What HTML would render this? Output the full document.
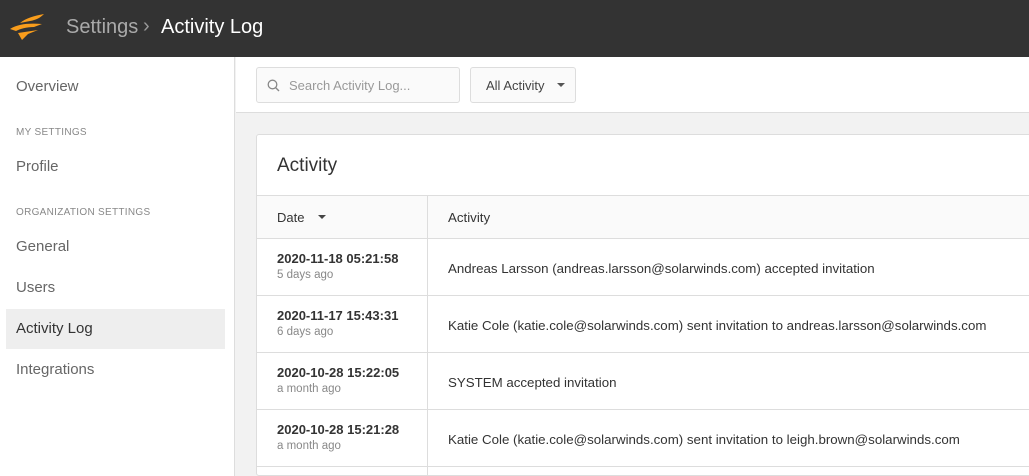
<!DOCTYPE html>
<html><head><style>
*{margin:0;padding:0;box-sizing:border-box}
html,body{width:1029px;height:476px;overflow:hidden}
body{font-family:"Liberation Sans",sans-serif;background:#f2f2f2;position:relative;color:#333}
.hdr{position:absolute;left:0;top:0;width:1029px;height:57px;background:#333}
.hdr .t{position:absolute;top:16px;font-size:20px}
.side{position:absolute;left:0;top:57px;width:235px;height:419px;background:#fff;border-right:1px solid #ddd}
.side .i{position:absolute;left:16px;font-size:15px;color:#666}
.side .s{position:absolute;left:16px;font-size:10px;color:#888;letter-spacing:.3px}
.act{position:absolute;left:6px;width:219px;height:40px;background:#eee}
.tool{position:absolute;left:236px;top:57px;width:793px;height:56px;background:#fff;border-bottom:1px solid #ddd}
.box{position:absolute;top:10px;height:36px;border:1px solid #ddd;border-radius:3px;background:#fafafa;font-size:13px}
.card{position:absolute;left:256px;top:134px;width:780px;height:342px;background:#fff;border:1px solid #ddd;border-radius:3px;overflow:hidden}
.row{position:absolute;left:0;width:780px;border-top:1px solid #ddd}
.vl{position:absolute;left:170px;top:61px;width:1px;height:300px;background:#ddd}
.d{position:absolute;left:20px;font-size:13px;font-weight:bold;color:#333}
.a{position:absolute;left:12px;font-size:11.5px;color:#888}
.x{position:absolute;left:191px;font-size:13.3px;color:#333}
</style></head><body>
<div class="hdr">
<svg style="position:absolute;left:8px;top:12px" width="38" height="30" viewBox="0 0 38 30"><path d="M2 17 C10 12 20 11 34 12 L26 15 C18 15 12 17 8 19Z" fill="#f99d1c"/><path d="M12 11 C18 6 26 4 36 2 C32 6 28 8 22 9Z" fill="#f99d1c"/><path d="M10 21 L30 18 L20 22 L14 28Z" fill="#f99d1c"/></svg>
<div class="t" style="left:66px;color:#aaa">Settings</div>
<div class="t" style="left:143px;color:#999;font-size:20px;top:15px">›</div>
<div class="t" style="left:161px;color:#fff">Activity Log</div>
</div>
<div class="side">
<div class="i" style="top:21px">Overview</div>
<div class="s" style="top:70px">MY SETTINGS</div>
<div class="i" style="top:101px">Profile</div>
<div class="s" style="top:150px">ORGANIZATION SETTINGS</div>
<div class="i" style="top:181px">General</div>
<div class="i" style="top:222px">Users</div>
<div class="act" style="top:252px"></div>
<div class="i" style="top:263px;color:#333">Activity Log</div>
<div class="i" style="top:304px">Integrations</div>
</div>
<div class="tool">
<div class="box" style="left:20px;width:204px"><svg style="position:absolute;left:10px;top:11px" width="13" height="13" viewBox="0 0 13 13"><circle cx="5.5" cy="5.5" r="4.3" fill="none" stroke="#888" stroke-width="1.3"/><path d="M8.6 8.6L12 12" stroke="#888" stroke-width="1.4"/></svg><span style="position:absolute;left:32px;top:10px;color:#999">Search Activity Log...</span></div>
<div class="box" style="left:234px;width:106px"><span style="position:absolute;left:15px;top:10px;color:#444">All Activity</span><span style="position:absolute;left:86px;top:15px;border:4px solid transparent;border-top-color:#555;border-bottom:0"></span></div>
</div>
<div class="card">
<div style="position:absolute;left:20px;top:20px;font-size:19px;color:#333">Activity</div>
<div class="row" style="top:60px;height:43px;background:#fafafa"></div>
<div class="d" style="top:75px;font-weight:normal">Date</div>
<span style="position:absolute;left:61px;top:80px;border:4px solid transparent;border-top-color:#444;border-bottom:0"></span>
<div class="x" style="top:75px">Activity</div>
<div class="row" style="top:103px"></div>
<div class="row" style="top:160px"></div>
<div class="row" style="top:217px"></div>
<div class="row" style="top:274px"></div>
<div class="row" style="top:331px"></div>
<div class="vl"></div>
<div class="d" style="top:116px">2020-11-18 05:21:58</div><div class="a" style="left:20px;top:134px">5 days ago</div>
<div class="x" style="top:126px">Andreas Larsson (andreas.larsson@solarwinds.com) accepted invitation</div>
<div class="d" style="top:173px">2020-11-17 15:43:31</div><div class="a" style="left:20px;top:191px">6 days ago</div>
<div class="x" style="top:183px">Katie Cole (katie.cole@solarwinds.com) sent invitation to andreas.larsson@solarwinds.com</div>
<div class="d" style="top:230px">2020-10-28 15:22:05</div><div class="a" style="left:20px;top:248px">a month ago</div>
<div class="x" style="top:240px">SYSTEM accepted invitation</div>
<div class="d" style="top:287px">2020-10-28 15:21:28</div><div class="a" style="left:20px;top:305px">a month ago</div>
<div class="x" style="top:297px">Katie Cole (katie.cole@solarwinds.com) sent invitation to leigh.brown@solarwinds.com</div>
</div>
</body></html>
